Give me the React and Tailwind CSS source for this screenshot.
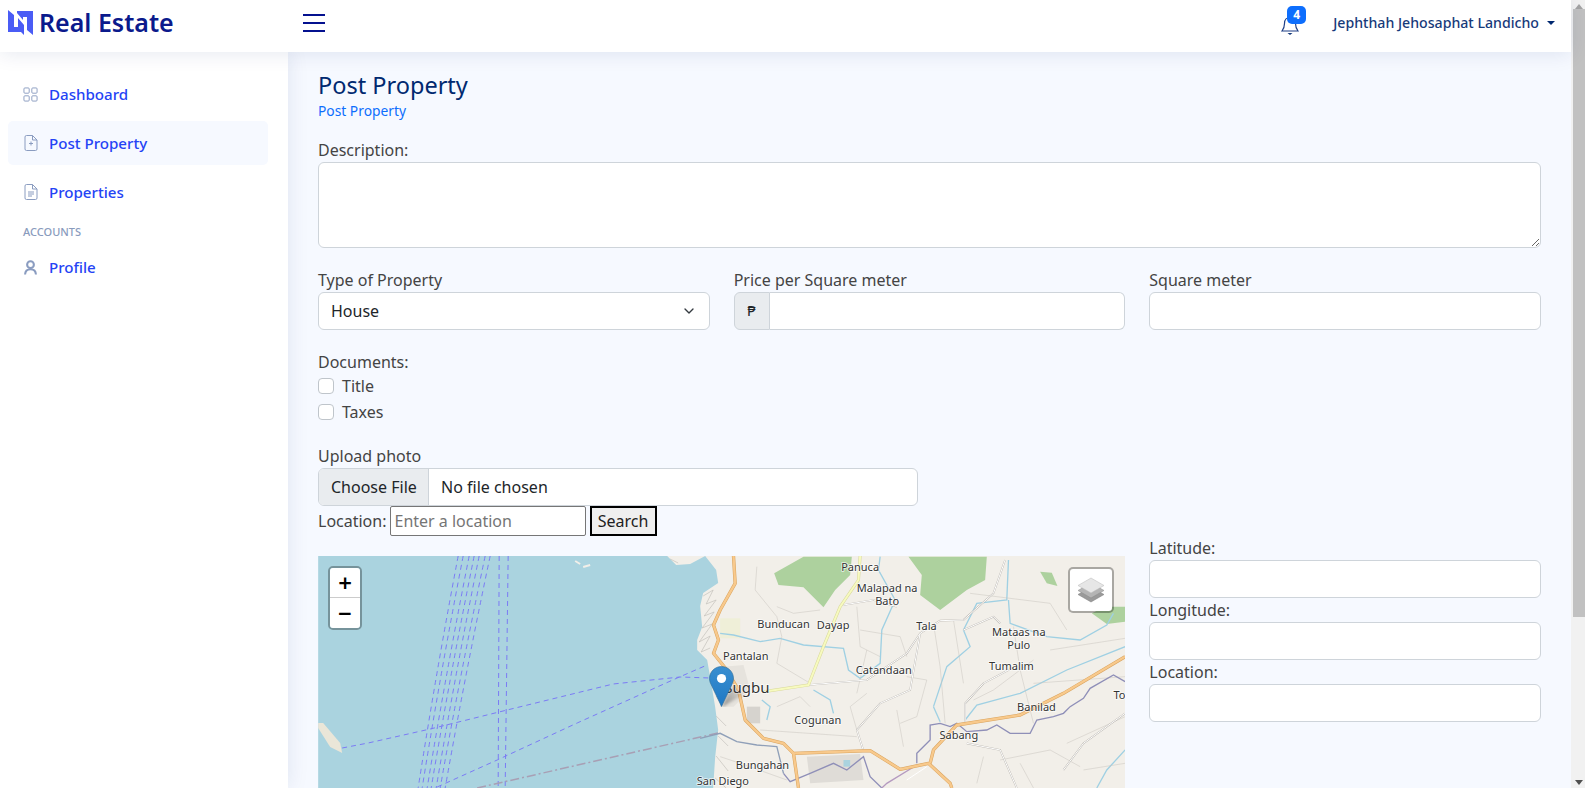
import { ChevronDown } from "lucide-react";

const mono = { fontFamily: '"Noto Sans", "Open Sans", sans-serif' };

// shipping lanes in the strait, x at the top and bottom of the map
const lanes = [
  [140, 100], [145, 104], [151, 109], [156, 113], [161, 118], [167, 122], [172, 127],
];

const labels = [
  ["Panuca", 480, 64, 33],
  ["Malapad na", 561, 127, 33],
  ["Bato", 561, 165, 33],
  ["Bunducan", 250, 235, 33],
  ["Dayap", 399, 237, 33],
  ["Tala", 679, 241, 33],
  ["Mataas na", 956, 257, 33],
  ["Pulo", 956, 296, 33],
  ["Pantalan", 137, 329, 33],
  ["Catandaan", 551, 371, 33],
  ["Tumalim", 934, 360, 33],
  ["Sugbu", 140, 429, 45],
  ["Cogunan", 353, 522, 33],
  ["Banilad", 1009, 483, 33],
  ["Sabang", 776, 567, 33],
  ["Bungahan", 187, 657, 33],
  ["San Diego", 68, 704, 33],
  ["To", 1258, 446, 33],
];

const whiteRoads = [
  "M325 405 L500 390 L620 310 L660 250 L720 212 L790 210 L880 130 L915 30",
  "M660 250 L630 420 L540 460 L470 540 L490 602",
  "M790 240 L880 200 L900 220",
  "M430 165 L520 150 L590 170",
  "M935 355 L850 400 L795 460 L795 520",
  "M800 580 L900 600 L950 714",
  "M1275 490 L1150 580 L1090 660",
];

const trunkRoads = [
  "M100 18 L105 100 L60 180 L40 225 L55 270 L40 310 L80 360 L115 420 L135 510 L190 565 L250 580 L280 610 L510 602 L600 658 L685 640 L750 700 L755 714",
  "M280 610 L295 714",
  "M690 640 L700 600 L770 525 L960 495 L1090 430 L1275 320",
];

function MapDrawing() {
  return (
    <svg viewBox="0 0 807 232" className="block w-full h-[232px]" style={mono}>
      <rect width="807" height="232" fill="#aad3df" />
      <path
        d="M349 0 L358 9 L372 8 L387 0 L398 14 L400 27 L385 37 L382 50 L384 71 L379 84 L379 94 L389 104 L392 121 L397 151 L400 174 L397 201 L395 232 L807 232 L807 0 Z"
        fill="#f2efe9"
      />
      <path d="M0 167 L5 167 L22 187 L24 197 L12 191 L0 172 Z" fill="#eae6d8" />
      <path d="M257 5 L262 8 M265 11 L272 9" stroke="#f2efe9" strokeWidth="2" />

      {/* ferry routes */}
      <g fill="none" stroke="#7b7bf5" strokeWidth="1" strokeDasharray="5 4">
        {lanes.map(([a, b]) => (
          <path key={a} d={`M${a} 0 Q${(a + b) / 2 - 2} 116 ${b} 232`} />
        ))}
        <path d="M181 0 L180 232" />
        <path d="M190 0 L187 232" />
        <path d="M24 192 L50 187 L112 173 L189 154 L295 128 L362 121 L392 122" />
        <path d="M119 231 L179 204 L259 167 L359 122 L389 109" />
      </g>
      <path d="M159 232 L400 177" fill="none" stroke="#a89fb4" strokeWidth="1.5" strokeDasharray="9 3 2 3" />

      {/* built up coast */}
      <g fill="none" stroke="#c4c1bb" strokeWidth="0.7">
        <path d="M352 3 L360 7 M385 40 L395 34 L388 48 L398 44 L386 60 L396 56 L384 72 L394 68 L381 86 L392 80 L383 96 L392 92" />
        <path d="M398 140 L404 150 M398 160 L408 170 M400 180 L410 190 M398 200 L410 215 M397 222 L408 232" />
      </g>

      {/* land details, drawn at 3x */}
      <g transform="translate(382 -6) scale(0.3333)" fill="none">
        <path d="M222 70 L310 20 L455 20 L450 75 L405 120 L370 172 L310 112 L235 105 Z" fill="#add19e" />
        <path d="M625 20 L860 20 L855 90 L800 120 L720 180 L660 135 L665 75 Z" fill="#add19e" />
        <path d="M1020 65 L1055 68 L1072 108 L1040 100 Z" fill="#add19e" />
        <path d="M1175 190 L1215 170 L1275 170 L1275 215 L1220 222 Z" fill="#add19e" />
        <path d="M320 620 L480 612 L490 690 L330 700 Z" fill="#dfdcd7" />
        <path d="M140 470 L180 470 L180 520 L140 520 Z" fill="#d6d3ce" />
        <path d="M70 350 L130 345 L150 420 L100 470 L60 470 Z" fill="#e6e3dd" />
        <rect x="60" y="205" width="60" height="60" fill="#eef0d0" opacity="0.7" />
        <path d="M430 630 H450 V650 H430 Z" fill="#aad3df" />

        {/* streams */}
        <g stroke="#9fd0e3" strokeWidth="4">
          <path d="M60 250 L100 255 L180 275 L240 265 L310 285 L430 295 L445 360 L480 385 L540 340 L545 240 L585 150 L535 60 L540 20" />
          <path d="M700 470 L740 350 L810 290 L790 240 L830 160 L920 150 L925 30" />
          <path d="M925 150 L930 220 L1040 260 L1140 270 L1220 225 L1240 190" />
          <path d="M795 510 L830 465 L960 430 L1100 360 L1275 290" />
          <path d="M700 470 L720 515" />
          <path d="M1275 600 L1220 660 L1190 714" />
          <path d="M185 450 L210 470 L200 510" />
          <path d="M340 420 L390 450 L400 490" />
        </g>

        {/* minor roads */}
        <g stroke="#c9c5bf" strokeWidth="1.5">
          <path d="M170 50 L165 120 L230 200 L245 260 L230 340 L330 400" />
          <path d="M230 170 L280 190 L360 180" />
          <path d="M470 170 L480 290 L540 320" />
          <path d="M480 240 L600 260 L620 320" />
          <path d="M700 220 L720 350 L735 520" />
          <path d="M760 210 L790 400" />
          <path d="M810 130 L1050 160 L1100 240" />
          <path d="M940 230 L960 360 L1000 520" />
          <path d="M620 380 L680 390 L650 500 L600 520" />
          <path d="M180 540 L470 560" />
          <path d="M590 480 L610 590" />
          <path d="M1000 400 L1275 380" />
          <path d="M900 630 L1050 600 L1140 650" />
          <path d="M960 640 L1000 714" />
          <path d="M1100 580 L1275 500" />
          <path d="M820 450 L880 420 L1000 330" />
          <path d="M60 620 L120 640 L260 690" />
          <path d="M500 430 L450 470 L470 540" />
          <path d="M230 470 L300 440 L330 470" />
          <path d="M500 300 L470 430" />
          <path d="M1050 300 L1275 265" />
          <path d="M1150 660 L1275 640" />
          <path d="M850 620 L830 700" />
        </g>

        {/* white roads */}
        <g stroke="#b8b4ae" strokeWidth="5">
          {whiteRoads.map((d) => (
            <path key={d} d={d} />
          ))}
        </g>
        <g stroke="#ffffff" strokeWidth="3">
          {whiteRoads.map((d) => (
            <path key={d} d={d} />
          ))}
          <path d="M620 690 L680 650" />
        </g>

        {/* boundary */}
        <path
          d="M650 640 L650 610 L690 570 L690 525 L720 520 L750 530 L770 520 L800 545 L860 540 L890 525 L930 550 L990 550 L1010 510 L1060 500 L1090 490 L1110 470 L1150 445 L1170 415 L1240 375 L1275 395"
          stroke="#8f8fb8"
          strokeWidth="4"
        />
        <path d="M250 670 L270 695 L330 670 L400 640 L440 660 L490 620 L510 680 L545 714" stroke="#8f8fb8" strokeWidth="4" />
        <path d="M650 645 L560 700 L545 714" stroke="#b59ac0" strokeWidth="4" />
        <path d="M0 565 L60 550 L110 575 L170 585 L230 590 L250 670" stroke="#8f9fb8" strokeWidth="4" />

        {/* trunk roads */}
        <g stroke="#d9a45f" strokeWidth="10" strokeLinejoin="round">
          {trunkRoads.map((d) => (
            <path key={d} d={d} />
          ))}
        </g>
        <g stroke="#f8c98c" strokeWidth="7" strokeLinejoin="round">
          {trunkRoads.map((d) => (
            <path key={d} d={d} />
          ))}
        </g>
        <path d="M480 18 L475 90 L420 170 L370 290 L325 405 L190 425" stroke="#d8d89a" strokeWidth="9" />
        <path d="M480 18 L475 90 L420 170 L370 290 L325 405 L190 425" stroke="#f7fabf" strokeWidth="6" />

        <g
          fill="#333333"
          stroke="#ffffff"
          strokeWidth="5"
          strokeOpacity="0.75"
          textAnchor="middle"
          style={{ paintOrder: "stroke" }}
        >
          {labels.map(([t, x, y, size]) => (
            <text key={t} x={x} y={y} fontSize={size}>
              {t}
            </text>
          ))}
        </g>
      </g>
    </svg>
  );
}

function Marker() {
  return (
    <svg viewBox="0 0 45 41" className="absolute left-[391px] top-[110px] w-[45px] h-[41px]">
      <defs>
        <linearGradient id="pin" x1="0" y1="0" x2="0" y2="1">
          <stop offset="0" stopColor="#3a8fd0" />
          <stop offset="1" stopColor="#1f78c4" />
        </linearGradient>
        <linearGradient id="pinShadow" x1="0" y1="1" x2="1" y2="0">
          <stop offset="0" stopColor="#444444" stopOpacity="0.55" />
          <stop offset="1" stopColor="#444444" stopOpacity="0" />
        </linearGradient>
      </defs>
      <path d="M13 41 L22 20 L35 28 Z" fill="url(#pinShadow)" className="blur-[1.5px]" />
      <path
        d="M12.5 0.5 C5.9 0.5 0.5 5.8 0.5 12.5 C0.5 15 1.2 16.8 2.2 18.8 L12.5 40.5 L22.8 18.8 C23.8 16.8 24.5 15 24.5 12.5 C24.5 5.8 19.1 0.5 12.5 0.5 Z"
        fill="url(#pin)"
        stroke="#2e6c97"
        strokeWidth="0.6"
      />
      <circle cx="12.5" cy="12.5" r="4.6" fill="#ffffff" />
    </svg>
  );
}

function TextField() {
  return <input type="text" className="block w-full h-[38px] rounded-md border border-[#ced4da] bg-white px-3" />;
}

function Sidebar() {
  const link = "flex items-center h-11 rounded-[5px] pl-[15px] text-[15.1px] font-medium text-[#2443f5]";
  return (
    <aside className="w-[288px] shrink-0 bg-white shadow-[0_0_20px_rgba(1,41,112,0.1)] pt-[20px] pl-2 pr-5 z-10">
      <a className={`${link} mb-[5px]`}>
        <svg viewBox="0 0 16 16" className="w-[15px] h-[15px] mr-[11px]" fill="none" stroke="#8a9cc0" strokeWidth="1">
          <rect x="1" y="1" width="5.6" height="5.6" rx="1" />
          <rect x="9.4" y="1" width="5.6" height="5.6" rx="1" />
          <rect x="1" y="9.4" width="5.6" height="5.6" rx="1" />
          <rect x="9.4" y="9.4" width="5.6" height="5.6" rx="1" />
        </svg>
        Dashboard
      </a>
      <a className={`${link} mb-[5px] bg-[#f6f9ff]`}>
        <svg viewBox="0 0 16 16" className="w-[16px] h-[16px] mr-[10px]" fill="none" stroke="#8a9cc0" strokeWidth="1">
          <path d="M9.5 0.5 H3.5 A1.5 1.5 0 0 0 2 2 V14 A1.5 1.5 0 0 0 3.5 15.5 H12.5 A1.5 1.5 0 0 0 14 14 V5 Z" />
          <path d="M9.5 0.5 V5 H14" />
          <path d="M8 6.5 V10.5 M6 8.5 H10" />
        </svg>
        Post Property
      </a>
      <a className={link}>
        <svg viewBox="0 0 16 16" className="w-[16px] h-[16px] mr-[10px]" fill="none" stroke="#8a9cc0" strokeWidth="1">
          <path d="M9.5 0.5 H3.5 A1.5 1.5 0 0 0 2 2 V14 A1.5 1.5 0 0 0 3.5 15.5 H12.5 A1.5 1.5 0 0 0 14 14 V5 Z" />
          <path d="M9.5 0.5 V5 H14" />
          <path d="M5 8 H11 M5 10 H11 M5 12 H9" />
        </svg>
        Properties
      </a>
      <p className="pl-[15px] mt-[9px] mb-[5px] text-[11px] leading-[17px] font-medium text-[#899bbd] uppercase">Accounts</p>
      <a className={link}>
        <svg viewBox="0 0 16 16" className="w-[15px] h-[15px] mr-[11px]" fill="none" stroke="#8a9cc0" strokeWidth="2.2">
          <circle cx="8" cy="5" r="3.6" />
          <path d="M2.2 15.5 C2.4 11.5 5 9.8 8 9.8 C11 9.8 13.6 11.5 13.8 15.5" />
        </svg>
        Profile
      </a>
    </aside>
  );
}

export default function App() {
  return (
    <div className="flex h-screen overflow-hidden text-[#444444] bg-[#f6f9ff]" style={mono}>
      <div className="flex-1 flex flex-col min-w-0">
        {/* HEADER */}
        <header className="relative z-20 h-[52px] shrink-0 flex items-center pb-[7px] bg-white shadow-[0_2px_20px_rgba(1,41,112,0.1)]">
          <div className="w-[303px] shrink-0 flex items-center pl-2">
            <svg viewBox="0 0 25 25" className="w-[25px] h-[25px] mr-[6px]">
              <path d="M0 0 L6 5 V17 H10 V8 L16 15 V25 L13 22 H0 Z" fill="#4a5cf5" />
              <path d="M9 1 H25 V25 L19 20 V7 H15 V10 L9 3 Z" fill="#4a5cf5" />
            </svg>
            <span className="text-[25px] font-semibold text-[#0b1a8c] leading-none">Real Estate</span>
          </div>
          <svg viewBox="0 0 22 18" className="w-[22px] h-[18px]" stroke="#04118f" strokeWidth="2">
            <path d="M0 1 H22 M0 9 H22 M0 17 H22" />
          </svg>
          <div className="ml-auto relative mr-[34px] w-[18px] h-[20px] mt-[4px]">
            <svg viewBox="0 0 18 20" className="w-[18px] h-[20px]">
              <path
                d="M1 16 C3 13.5 3.5 11.5 3.5 8.5 C3.5 4.5 6 2.5 9 2.5 C12 2.5 14.5 4.5 14.5 8.5 C14.5 11.5 15 13.5 17 16 Z"
                fill="none"
                stroke="#1f3f86"
                strokeWidth="1.2"
              />
              <path d="M6.5 18 H11.5 L9 20 Z" fill="#173a7a" />
            </svg>
            <span className="absolute left-[6px] top-[-9px] h-[18px] w-[19px] rounded-[5px] bg-[#0d6efd] text-white text-[12px] font-bold flex items-center justify-center">4</span>
          </div>
          <span className="text-[14.15px] font-medium text-[#173a7a]">Jephthah Jehosaphat Landicho</span>
          <span className="ml-[8px] mr-[16px] w-0 h-0 border-x-[4px] border-x-transparent border-t-[4px] border-t-[#012970]" />
        </header>

        <div className="flex-1 flex min-h-0">
          <Sidebar />

          {/* CONTENT */}
          <main className="flex-1 min-w-0 overflow-hidden px-[30px] pt-[19px]">
            <h1 className="text-[23.5px] leading-[29px] font-normal text-[#012970]">Post Property</h1>
            <p className="text-[13.8px] leading-[21px] text-[#0d6efd] mb-[17px]">Post Property</p>

            <label className="block leading-6">Description:</label>
            <textarea rows={3} className="block w-full h-[86px] rounded-md border border-[#ced4da] bg-white mb-5" />

            <div className="grid grid-cols-3 gap-x-6 mb-5">
              <div>
                <label className="block leading-6">Type of Property</label>
                <div className="h-[38px] rounded-md border border-[#ced4da] bg-white pl-3 pr-3 flex items-center justify-between text-[#212529]">
                  House
                  <ChevronDown size={16} strokeWidth={2} className="text-[#343a40]" />
                </div>
              </div>
              <div>
                <label className="block leading-6">Price per Square meter</label>
                <div className="flex h-[38px]">
                  <span className="w-[36px] shrink-0 flex items-center justify-center rounded-l-md border border-[#ced4da] bg-[#e9ecef] text-[#212529] text-[14px] font-['DejaVu_Sans']">₱</span>
                  <input type="text" className="min-w-0 flex-1 rounded-r-md border border-l-0 border-[#ced4da] bg-white" />
                </div>
              </div>
              <div>
                <label className="block leading-6">Square meter</label>
                <TextField />
              </div>
            </div>

            <label className="block leading-6">Documents:</label>
            <label className="flex items-center h-6 mb-[2px]">
              <span className="w-4 h-4 mr-2 rounded-[4px] border border-[#bfc5cb] bg-white" />
              Title
            </label>
            <label className="flex items-center h-6 mb-5">
              <span className="w-4 h-4 mr-2 rounded-[4px] border border-[#bfc5cb] bg-white" />
              Taxes
            </label>

            <label className="block leading-6">Upload photo</label>
            <div className="flex h-[38px] w-[600px] rounded-md border border-[#ced4da] bg-white overflow-hidden text-[#212529]">
              <span className="w-[110px] shrink-0 pl-3 flex items-center bg-[#e9ecef] border-r border-[#ced4da] whitespace-nowrap">Choose File</span>
              <span className="px-3 flex items-center">No file chosen</span>
            </div>

            <div className="flex items-center h-[30px]">
              <span className="mr-[4px]">Location:</span>
              <input
                type="text"
                placeholder="Enter a location"
                className="w-[196px] h-[30px] rounded-[2px] border border-[#767676] bg-white px-[3px] placeholder:text-[#757575]"
              />
              <button className="ml-1 w-[67px] h-[30px] border-2 border-black bg-[#efefef] text-[#212121] pr-[2px]">Search</button>
            </div>

            <div className="grid grid-cols-3 gap-x-6">
              <div className="col-span-2 mt-5 relative overflow-hidden">
                <MapDrawing />
                <div className="absolute left-[10px] top-[10px] w-[34px] rounded-[5px] border-2 border-black/30 bg-clip-padding">
                  <div className="h-[30px] bg-white rounded-t-[3px] border-b border-[#cccccc] flex items-center justify-center text-[24px] font-semibold text-black leading-none">+</div>
                  <div className="h-[30px] bg-white rounded-b-[3px] flex items-center justify-center text-[24px] font-semibold text-black leading-none">−</div>
                </div>
                <div className="absolute right-[11px] top-[11px] w-[46px] h-[46px] rounded-[5px] border-2 border-black/30 bg-white bg-clip-padding flex items-center justify-center">
                  <svg viewBox="0 0 26 26" className="w-[26px] h-[26px]">
                    <path d="M0 17.5 L13 10 L26 17.5 L13 25 Z" fill="#9a9a9a" stroke="#7d7d7d" strokeWidth="0.5" />
                    <path d="M0 13.5 L13 6 L26 13.5 L13 21 Z" fill="#b4b4b4" stroke="#8a8a8a" strokeWidth="0.5" />
                    <path d="M0 8.5 L13 1 L26 8.5 L13 16 Z" fill="#e6e6e6" stroke="#b8b8b8" strokeWidth="0.5" />
                  </svg>
                </div>
                <Marker />
              </div>
              <div>
                <label className="block leading-6">Latitude:</label>
                <TextField />
                <label className="block leading-6">Longitude:</label>
                <TextField />
                <label className="block leading-6">Location:</label>
                <TextField />
              </div>
            </div>
          </main>
        </div>
      </div>

      {/* page scrollbar */}
      <div className="w-[14px] shrink-0 bg-[#f1f1f1] pl-[2px] flex flex-col items-center relative">
        <span className="mt-[2px] h-[7px] w-0 border-x-[4px] border-x-transparent border-b-[5px] border-b-[#a3a3a3]" />
        <div className="w-full h-[608px] bg-[#c1c1c1]" />
        <span className="absolute bottom-[3px] w-0 h-0 border-x-[4px] border-x-transparent border-t-[5px] border-t-[#505050]" />
      </div>
    </div>
  );
}
